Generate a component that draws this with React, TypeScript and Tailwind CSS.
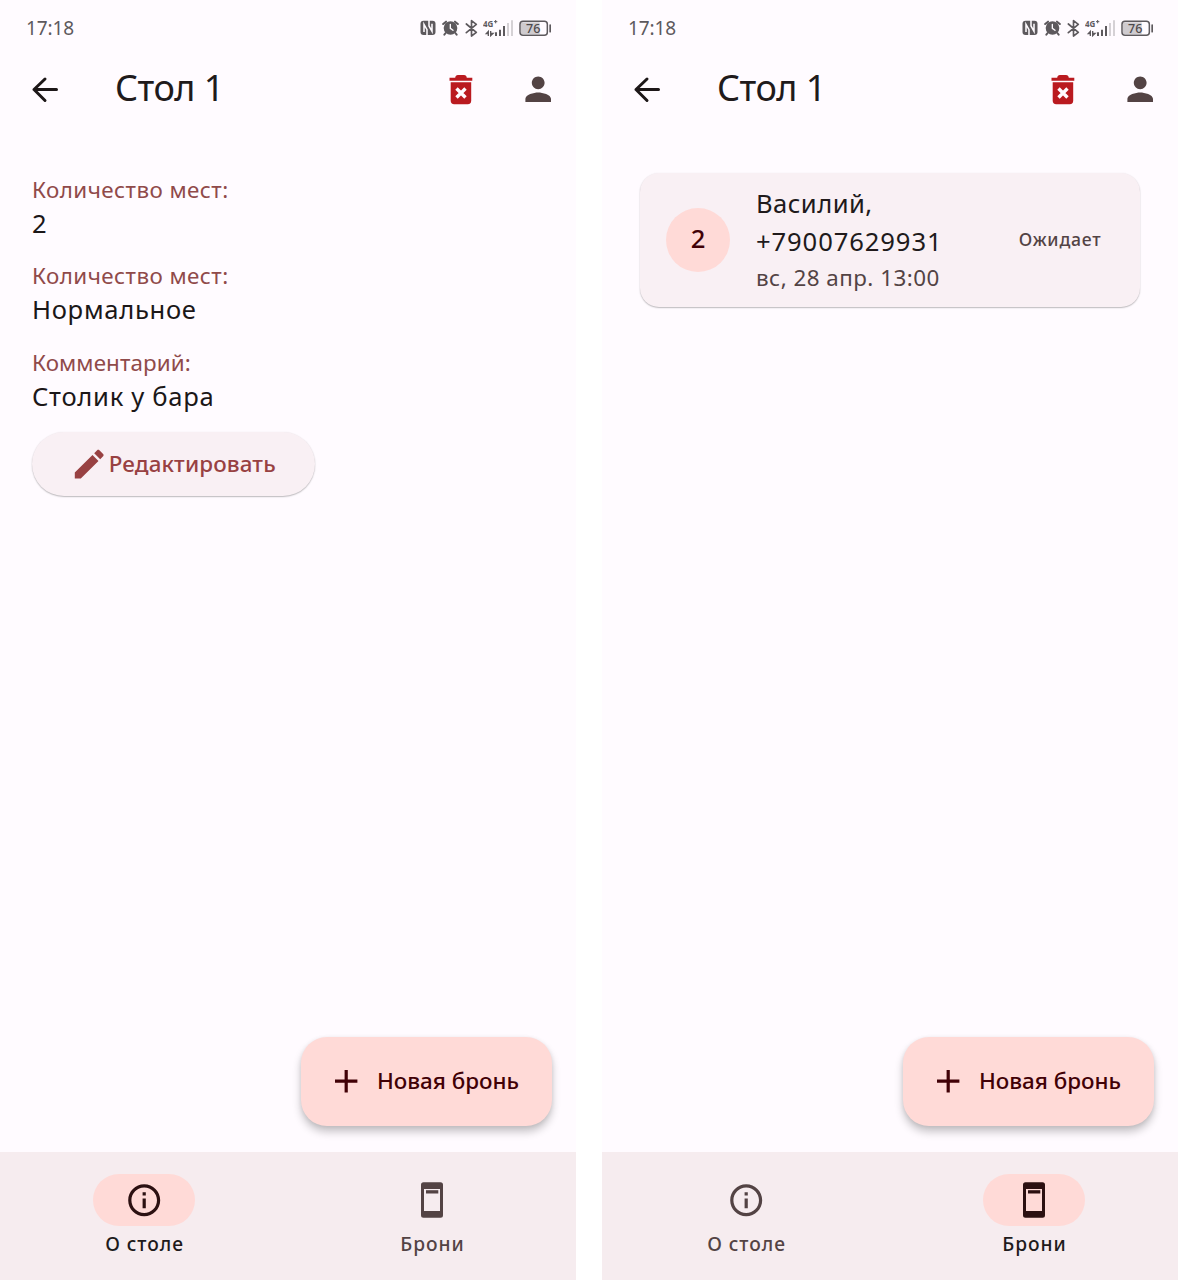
import type { ReactNode } from 'react';

function StatusIcons() {
  return (
    <div className="flex items-center text-[#5d595d]">
      <svg className="mr-[6px] h-[18px] w-[16px]" viewBox="30 26 48 54" fill="none">
        <rect x="31.500" y="31" width="45" height="43" rx="9" fill="currentColor" />
        <path d="M42 65V42L51 58V76M66 40V63L57 47V29" stroke="#fffbff" strokeWidth="4.600" />
      </svg>
      <svg className="mr-[6px] h-[18px] w-[17px]" viewBox="96 26 51 54" fill="none">
        <path d="M99.500 41L108 34M143.500 41L135 34" stroke="currentColor" strokeWidth="6" strokeLinecap="round" />
        <path d="M107 68L103 73M136 68L140 73" stroke="currentColor" strokeWidth="6" strokeLinecap="round" />
        <circle cx="121.500" cy="53" r="20.500" fill="currentColor" />
        <path d="M121 42V54L129 60" stroke="#fffbff" strokeWidth="4" strokeLinecap="round" />
      </svg>
      <svg className="mr-[5px] h-[18px] w-[13px]" viewBox="165 26 39 54" fill="none" stroke="currentColor" strokeWidth="5" strokeLinejoin="round" strokeLinecap="round">
        <path d="M169 41L199 66L184.500 77V31L199 42L169 67" />
      </svg>
      <svg className="mr-[6px] h-[18px] w-[30px]" viewBox="219 26 90 54">
        <text x="219" y="51" fontSize="26" fontWeight="700" textLength="31" lengthAdjust="spacingAndGlyphs" fill="currentColor">4G</text>
        <path d="M252 34H262M257 29V39" stroke="currentColor" strokeWidth="3" />
        <path d="M235 77V63L229 69.500H235M242 62V76L249 69.500H242" fill="none" stroke="currentColor" strokeWidth="4" />
        <path d="M255 66H261V77H255ZM267 58H273V77H267ZM279 47H285V77H279Z" fill="currentColor" />
        <path d="M291 38H297V77H291ZM303 30H309V77H303Z" fill="#d5d1d5" />
      </svg>
      <svg className="h-[18px] w-[33px]" viewBox="327 26 99 54">
        <path d="M333 36H389V71H333Z" fill="#cfcbcf" />
        <rect x="330" y="32.500" width="82" height="42" rx="9" fill="none" stroke="currentColor" strokeWidth="4.500" />
        <path d="M420.500 44V64" stroke="currentColor" strokeWidth="5" strokeLinecap="round" />
        <text x="348" y="68" fontSize="40" fontWeight="500" textLength="43" lengthAdjust="spacingAndGlyphs" fill="#4d494d">76</text>
      </svg>
    </div>
  );
}

function StatusBar() {
  return (
    <div className="flex h-[55px] items-center justify-between pl-[26px] pr-[24px]">
      <span className="text-[19px] leading-[24px] tracking-[-0.100px] text-[#5d595d]">17:18</span>
      <StatusIcons />
    </div>
  );
}

function AppBar() {
  return (
    <header className="flex h-[70px] items-center pl-[26px] pr-[19px]">
      <svg className="h-[38px] w-[38px]" viewBox="0 0 38 38" fill="none" stroke="#1d1718" strokeWidth="3" strokeLinecap="round" strokeLinejoin="round">
        <path d="M30.500 18.500H8M19 8L8 18.500L19 29.500" />
      </svg>
      <h1 className="ml-[51px] mb-[4px] text-[36px] leading-[48px] tracking-[-0.500px] text-[#201a1b]">Стол 1</h1>
      <svg className="ml-auto h-[38px] w-[38px]" viewBox="0 0 38 38">
        <path d="M7.500 6.700H13.200C13.500 5 14.200 4 16 4H22C23.800 4 24.500 5 24.800 6.700H30.300V9.700H7.500Z" fill="#ba1a20" />
        <path d="M8.700 11.200H29.200V29.500Q29.200 33.300 25.700 33.300H12.200Q8.700 33.300 8.700 29.500Z" fill="#ba1a20" />
        <path d="M14.500 17.500L23.500 26.500M23.500 17.500L14.500 26.500" stroke="#fffbff" strokeWidth="3.400" />
      </svg>
      <svg className="ml-[38.600px] mb-px h-[38.4px] w-[38.4px]" viewBox="0 0 24 24" fill="#534344">
        <path d="M12 12c2.210 0 4-1.790 4-4s-1.790-4-4-4-4 1.790-4 4 1.790 4 4 4zm0 2c-2.670 0-8 1.340-8 4v2h16v-2c0-2.660-5.330-4-8-4z" />
      </svg>
    </header>
  );
}

function Fab() {
  return (
    <button className="mb-[25.600px] mr-[24.400px] flex h-[89.600px] w-[251px] items-center self-end rounded-[26px] bg-[#ffdad7] pl-[26px] text-[#410006] shadow-[0_6px_9px_rgba(0,0,0,0.22),0_1px_4px_rgba(0,0,0,0.08)]">
      <svg className="h-[38.4px] w-[38.4px]" viewBox="0 0 24 24" fill="currentColor">
        <path d="M19 13h-6v6h-2v-6H5v-2h6V5h2v6h6v2z" />
      </svg>
      <span className="ml-[12px] mb-px whitespace-nowrap text-[22.4px] font-medium leading-[32px]">Новая бронь</span>
    </button>
  );
}

function InfoIcon() {
  return (
    <svg className="h-[38.4px] w-[38.4px]" viewBox="0 0 24 24" fill="currentColor">
      <path d="M11 7h2v2h-2zm0 4h2v6h-2zm1-9C6.480 2 2 6.480 2 12s4.480 10 10 10 10-4.480 10-10S17.520 2 12 2zm0 18c-4.410 0-8-3.590-8-8s3.590-8 8-8 8 3.590 8 8-3.590 8-8 8z" />
    </svg>
  );
}

function BookingIcon() {
  return (
    <svg className="h-[38px] w-[38px]" viewBox="0 0 38 38" fill="currentColor">
      <path fillRule="evenodd" d="M10.500 1.300H27.500Q30 1.300 30 3.800V34.200Q30 36.700 27.500 36.700H10.500Q8 36.700 8 34.200V3.800Q8 1.300 10.500 1.300ZM11 8V30H27V8Z" />
      <path d="M13 9.200H25.300V12.500H13Z" />
    </svg>
  );
}

function NavItem({ icon, label, active }: { icon: ReactNode; label: string; active: boolean }) {
  return (
    <div className="flex flex-1 flex-col items-center pt-[22.4px]">
      <div className={active ? 'flex h-[51.2px] w-[102.4px] items-center justify-center rounded-full bg-[#ffdad7] text-[#2c1011]' : 'flex h-[51.2px] w-[102.4px] items-center justify-center text-[#534344]'}>
        {icon}
      </div>
      <span className={active ? 'mt-[5px] pl-px text-[19.2px] font-medium leading-[26px] tracking-[0.950px] text-[#201a1b]' : 'mt-[5px] pl-px text-[19.2px] font-medium leading-[26px] tracking-[0.950px] text-[#534344]'}>
        {label}
      </span>
    </div>
  );
}

function Phone({ tab, children }: { tab: 'about' | 'bookings'; children: ReactNode }) {
  return (
    <section className="flex h-[1280px] w-[576px] flex-col bg-[#fffbff]">
      <StatusBar />
      <AppBar />
      <main className="flex flex-1 flex-col pt-[47.800px]">{children}</main>
      <Fab />
      <nav className="flex h-[128px] bg-[#f6ecef]">
        <NavItem icon={<InfoIcon />} label="О столе" active={tab === 'about'} />
        <NavItem icon={<BookingIcon />} label="Брони" active={tab === 'bookings'} />
      </nav>
    </section>
  );
}

function Field({ label, value, labelClass = 'tracking-[0.440px]' }: { label: string; value: string; labelClass?: string }) {
  return (
    <div className="mb-[18.400px] pl-[32px]">
      <div className={`text-[22.4px] leading-[32px] text-[#904a4a] ${labelClass}`}>{label}</div>
      <div className="text-[25.6px] leading-[36px] tracking-[0.700px] text-[#1b1718]">{value}</div>
    </div>
  );
}

function BookingCard() {
  return (
    <article className="mx-[38px] flex h-[134.400px] items-center rounded-[19px] bg-[#f9f0f4] pl-[26px] pr-[38.500px] shadow-[0_1px_1.500px_rgba(0,0,0,0.26),0_0_2px_rgba(0,0,0,0.04)]">
      <div className="flex h-16 w-16 items-center justify-center rounded-full bg-[#ffdad7] pb-[2px] text-[25.6px] font-medium leading-none text-[#410006]">2</div>
      <div className="ml-[26px] text-[#201a1b]">
        <div className="text-[25.6px] leading-[38.400px] tracking-[0.450px]">Василий,</div>
        <div className="text-[25.6px] leading-[38.400px] tracking-[0.900px]">+79007629931</div>
        <div className="text-[22.4px] leading-[34px] tracking-[0.480px] text-[#534344]">вс, 28 апр. 13:00</div>
      </div>
      <span className="ml-auto pb-px text-[17.6px] font-medium leading-[26px] tracking-[0.800px] text-[#534344]">Ожидает</span>
    </article>
  );
}

export default function App() {
  return (
    <div className="flex h-[1282px] w-[1180px] gap-[26px] overflow-hidden bg-white font-['Noto_Sans',sans-serif]">
      <Phone tab="about">
        <div className="pt-[1.200px]">
          <Field label="Количество мест:" value="2" />
          <Field label="Количество мест:" value="Нормальное" />
          <Field label="Комментарий:" value="Столик у бара" labelClass="tracking-[0.100px]" />
        </div>
        <button className="-mt-[1.200px] ml-[32px] flex h-[64px] w-[282.600px] items-center rounded-full bg-[#f9f0f4] pl-[38.400px] text-[#984142] shadow-[0_1px_1.500px_rgba(0,0,0,0.26),0_0_2px_rgba(0,0,0,0.04)]">
          <svg className="h-[38.4px] w-[38.4px]" viewBox="0 0 24 24" fill="currentColor">
            <path d="M3 17.250V21h3.750L17.810 9.940l-3.750-3.750L3 17.250zM20.710 7.040c.390-.390.390-1.020 0-1.410l-2.340-2.340c-.390-.390-1.020-.390-1.410 0l-1.830 1.830 3.750 3.750 1.830-1.830z" />
          </svg>
          <span className="text-[22.4px] font-medium leading-[32px] tracking-[0.120px]">Редактировать</span>
        </button>
      </Phone>
      <Phone tab="bookings">
        <BookingCard />
      </Phone>
    </div>
  );
}
